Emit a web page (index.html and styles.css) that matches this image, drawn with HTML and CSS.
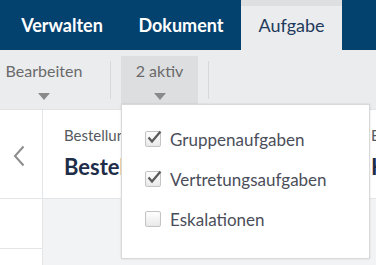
FILE: index.html
```html
<!DOCTYPE html>
<html lang="de">
<head>
<meta charset="utf-8">
<link rel="stylesheet" href="styles.css">
</head>
<body>
<div class="app">
  <nav class="tabs">
    <div class="tab tab-verwalten">Verwalten</div>
    <div class="tab tab-dokument">Dokument</div>
    <div class="tab tab-aufgabe active">Aufgabe</div>
  </nav>
  <div class="toolbar">
    <div class="tool tool-edit">
      <span class="tool-label">Bearbeiten</span>
      <span class="caret"></span>
    </div>
    <div class="sep sep-first"></div>
    <div class="tool tool-filter">
      <span class="tool-label">2 aktiv</span>
      <span class="caret"></span>
    </div>
    <div class="sep sep-second"></div>
  </div>
  <div class="content">
    <aside class="side">
      <div class="side-row side-nav">
        <svg class="chev" width="12" height="22" viewBox="0 0 12 22"><path d="M10.5 1.5 L2 11 L10.5 20.5" fill="none" stroke="#8c8c8c" stroke-width="2"/></svg>
      </div>
      <div class="side-row side-empty"></div>
      <div class="side-row side-last"></div>
    </aside>
    <main class="main">
      <div class="cards">
        <div class="card card-first">
          <div class="card-kicker">Bestellung</div>
          <div class="card-title">Bestellung 4711</div>
        </div>
        <div class="card card-second">
          <div class="card-kicker">Eingang</div>
          <div class="card-title">Handel</div>
        </div>
      </div>
    </main>
  </div>
  <div class="menu">
    <label class="opt">
      <span class="box checked"><svg width="18" height="18" viewBox="0 0 18 18"><path d="M3.5 8.5 L7 12.5 L15.5 2.5" fill="none" stroke="#5a5a5a" stroke-width="2.2"/></svg></span>
      <span class="opt-label">Gruppenaufgaben</span>
    </label>
    <label class="opt">
      <span class="box checked"><svg width="18" height="18" viewBox="0 0 18 18"><path d="M3.5 8.5 L7 12.5 L15.5 2.5" fill="none" stroke="#5a5a5a" stroke-width="2.2"/></svg></span>
      <span class="opt-label">Vertretungsaufgaben</span>
    </label>
    <label class="opt">
      <span class="box"></span>
      <span class="opt-label">Eskalationen</span>
    </label>
  </div>
</div>
</body>
</html>
```

FILE: styles.css
```css
* { box-sizing: border-box; }
html, body { margin: 0; padding: 0; }
body {
  width: 376px;
  height: 265px;
  overflow: hidden;
  font-family: Lato, "Open Sans", "Liberation Sans", sans-serif;
  background: #f2f3f5;
}
.app { position: relative; width: 376px; height: 265px; overflow: hidden; }

.tabs {
  display: flex;
  height: 50px;
  background: #03416f;
}
.tab {
  display: flex;
  align-items: center;
  justify-content: center;
  flex: none;
  height: 50px;
  font-size: 18px;
  font-weight: 700;
  color: #ffffff;
  padding-bottom: 1px;
}
.tab-verwalten { width: 121px; padding-left: 3px; }
.tab-dokument { width: 120px; }
.tab-aufgabe { width: 101px; }
.tab.active {
  background: #ebecee;
  border-top: 6px solid #dedfe1;
  color: #1f3a5c;
  font-weight: 400;
  padding-bottom: 7px;
}

.toolbar {
  display: flex;
  align-items: flex-start;
  height: 60px;
  background: #ebecee;
  border-bottom: 1px solid #e2e3e5;
}
.tool {
  display: flex;
  flex-direction: column;
  align-items: center;
  flex: none;
  height: 48px;
  margin-top: 6px;
  padding-top: 5px;
}
.tool-label {
  font-size: 16px;
  line-height: 20px;
  color: #6a6a6a;
}
.caret {
  margin-top: 12px;
  width: 0;
  height: 0;
  border-left: 6.5px solid transparent;
  border-right: 6.5px solid transparent;
  border-top: 7px solid #8a8a8a;
}
.tool-edit { width: 88px; }
.tool-filter {
  width: 77px;
  margin-left: 10px;
  background: #dddee0;
}
.sep {
  flex: none;
  width: 1px;
  height: 38px;
  margin-top: 11px;
  background: #d7d8da;
}
.sep-first { margin-left: 22px; }
.sep-second { margin-left: 10px; }

.content {
  display: flex;
  height: 155px;
}
.side {
  flex: none;
  width: 43px;
  background: #ffffff;
  border-right: 1px solid #e4e5e7;
  display: flex;
  flex-direction: column;
}
.side-row { border-bottom: 1px solid #e4e5e7; }
.side-nav {
  height: 89px;
  display: flex;
  align-items: center;
  justify-content: center;
  padding-right: 4px;
  padding-top: 4px;
}
.side-empty { height: 50px; }
.side-last { flex: 1; border-bottom: none; }

.main { flex: 1; min-width: 0; }
.cards {
  display: flex;
  height: 89px;
  background: #ffffff;
  border-bottom: 1px solid #e4e5e7;
}
.card { padding: 15px 0 0 21px; white-space: nowrap; overflow: hidden; flex: none; }
.card-first { width: 307px; border-right: 1px solid #e4e5e7; }
.card-second { width: 100px; }
.card-kicker {
  font-size: 15px;
  line-height: 20px;
  color: #555a60;
}
.card-title {
  margin-top: 9px;
  font-size: 22px;
  line-height: 26px;
  font-weight: 700;
  color: #1e2d48;
}

.menu {
  position: absolute;
  left: 121px;
  top: 104px;
  width: 249px;
  height: 155px;
  background: #ffffff;
  border: 1px solid #d9d9d9;
  box-shadow: 0 0 2px rgba(0, 0, 0, 0.12);
  padding: 14px 0 0 23px;
  display: flex;
  flex-direction: column;
}
.opt {
  display: flex;
  align-items: center;
  height: 40px;
}
.box {
  position: relative;
  width: 16px;
  height: 16px;
  border: 1px solid #c4c4c4;
  border-radius: 2px;
  background: linear-gradient(#ffffff, #e9e9e9);
  box-shadow: inset 0 0 1px rgba(0,0,0,0.08);
  flex: none;
}
.box svg {
  position: absolute;
  left: -1px;
  top: -3px;
}
.opt-label {
  margin-left: 9px;
  font-size: 17px;
  color: #4b4e5a;
}
```
